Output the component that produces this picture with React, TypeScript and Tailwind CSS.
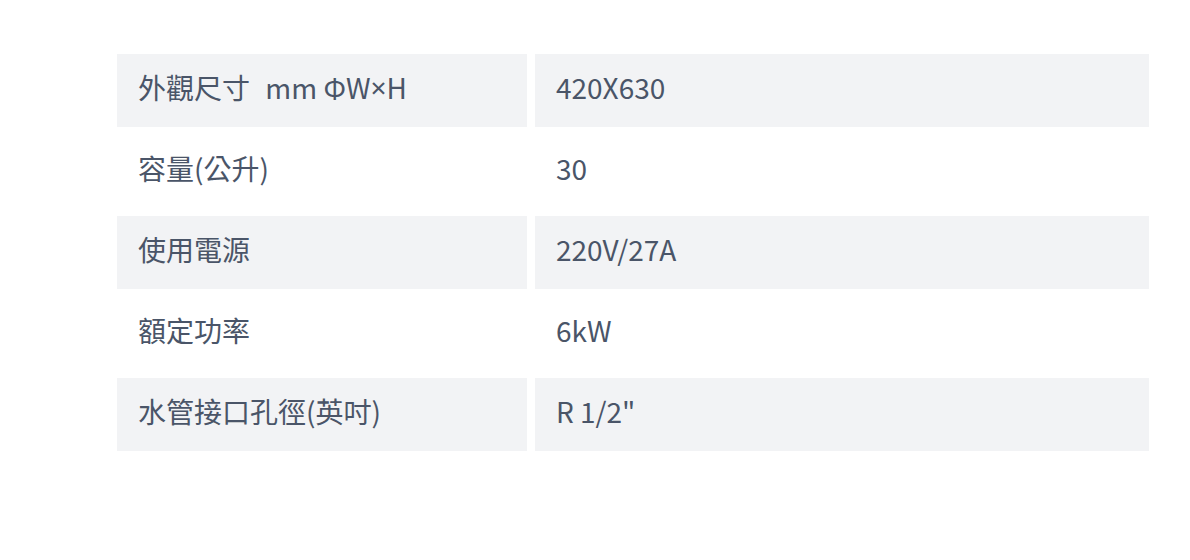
import React from 'react';

const specs = [
  {
    label: (
      <>
        外觀尺寸<span className="pl-[9px]"> mm ΦW</span>
        <span style={{ fontFamily: '"Noto Sans", sans-serif' }}>×</span>H
      </>
    ),
    key: 'size',
    value: '420X630',
  },
  { label: '容量(公升)', key: 'capacity', value: '30' },
  { label: '使用電源', key: 'power', value: '220V/27A' },
  { label: '額定功率', key: 'rated', value: '6kW' },
  { label: '水管接口孔徑(英吋)', key: 'pipe', value: 'R 1/2"' },
];

const App = () => {
  return (
    <div
      className="w-[1190px] h-[560px] bg-white pt-[54px] pl-[117px]"
      style={{ fontFamily: '"Noto Sans CJK TC", "Noto Sans", sans-serif' }}
    >
      <div className="grid grid-cols-[410px_614px] gap-2 text-[28px] text-[#4a5568]">
        {specs.map((row, index) => {
          const bg = index % 2 === 0 ? 'bg-[#f2f3f5]' : 'bg-white';
          return (
            <React.Fragment key={row.key}>
              <div className={`${bg} h-[73px] flex items-center pl-[21px] pb-[8px] whitespace-pre`}>{row.label}</div>
              <div className={`${bg} h-[73px] flex items-center pl-[21px] pb-[8px]`}>{row.value}</div>
            </React.Fragment>
          );
        })}
      </div>
    </div>
  );
};

export default App;
